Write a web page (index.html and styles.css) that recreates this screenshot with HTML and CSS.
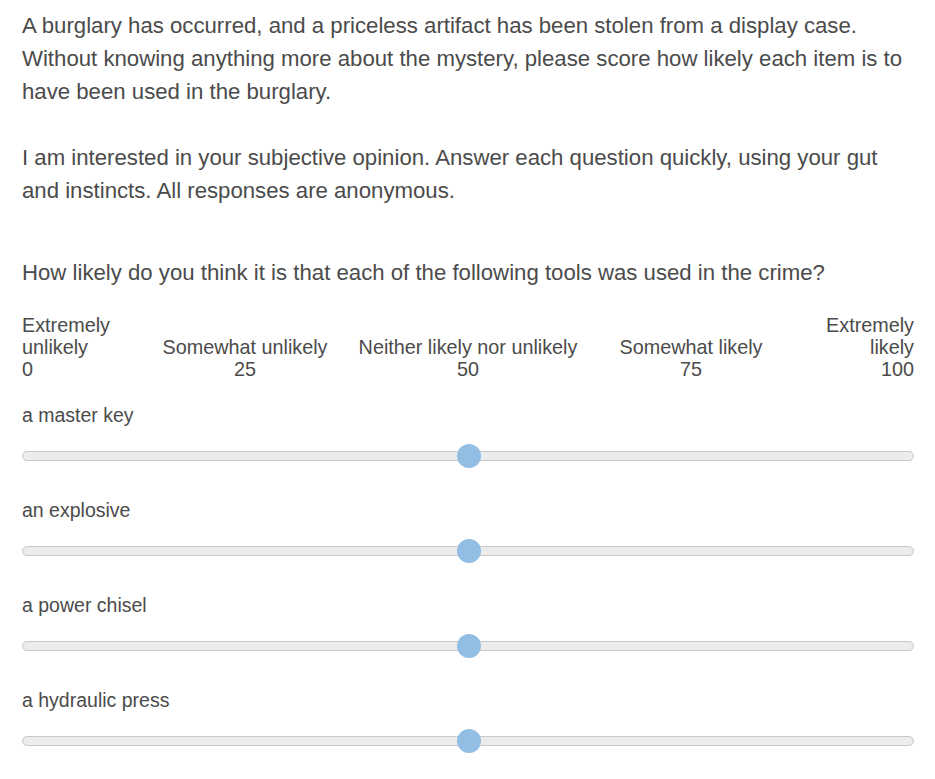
FILE: index.html
```html
<!DOCTYPE html>
<html>
<head>
<meta charset="utf-8">
<link rel="stylesheet" href="styles.css">
</head>
<body>
<div class="page">
  <div class="intro">
    <p>A burglary has occurred, and a priceless artifact has been stolen from a display case. Without knowing anything more about the mystery, please score how likely each item is to have been used in the burglary.</p>
    <p>I am interested in your subjective opinion. Answer each question quickly, using your gut and instincts. All responses are anonymous.</p>
  </div>
  <div class="question">How likely do you think it is that each of the following tools was used in the crime?</div>
  <div class="scale">
    <div class="lbl l0">Extremely unlikely<br>0</div>
    <div class="lbl l25">Somewhat unlikely<br>25</div>
    <div class="lbl l50">Neither likely nor unlikely<br>50</div>
    <div class="lbl l75">Somewhat likely<br>75</div>
    <div class="lbl l100">Extremely likely<br>100</div>
  </div>
  <div class="item">
    <div class="item-label">a master key</div>
    <div class="track"><div class="thumb" style="left:50%"></div></div>
  </div>
  <div class="item">
    <div class="item-label">an explosive</div>
    <div class="track"><div class="thumb" style="left:50%"></div></div>
  </div>
  <div class="item">
    <div class="item-label">a power chisel</div>
    <div class="track"><div class="thumb" style="left:50%"></div></div>
  </div>
  <div class="item">
    <div class="item-label">a hydraulic press</div>
    <div class="track"><div class="thumb" style="left:50%"></div></div>
  </div>
</div>
</body>
</html>
```

FILE: styles.css
```css
html, body {
  margin: 0;
  padding: 0;
  background: #fff;
}
body {
  font-family: "Liberation Sans", Arial, sans-serif;
  color: #4b4b4b;
}
.page {
  padding: 9px 21px 0 22px;
}
.intro p {
  margin: 0 0 33px 0;
  font-size: 22.2px;
  line-height: 33px;
}
.question {
  margin-top: 49px;
  font-size: 22.2px;
  line-height: 33px;
}
.scale {
  margin-top: 25px;
  display: grid;
  grid-template-columns: repeat(8, 1fr);
  align-items: end;
  font-size: 19.8px;
  line-height: 22px;
}
.lbl { text-align: center; }
.l0 { grid-column: 1 / 2; text-align: left; }
.l25 { grid-column: 2 / 4; }
.l50 { grid-column: 4 / 6; }
.l75 { grid-column: 6 / 8; }
.l100 { grid-column: 8 / 9; text-align: right; }
.item {
  padding-top: 23px;
}
.item-label {
  font-size: 19.5px;
  line-height: 24px;
}
.track {
  position: relative;
  margin-top: 24px;
  margin-bottom: 14px;
  height: 8px;
  background: #ececec;
  border: 1px solid #c9c9c9;
  border-radius: 6px;
}
.thumb {
  position: absolute;
  top: 50%;
  width: 24px;
  height: 24px;
  margin: -12px 0 0 -11px;
  border-radius: 50%;
  background: #92bee3;
}
```
